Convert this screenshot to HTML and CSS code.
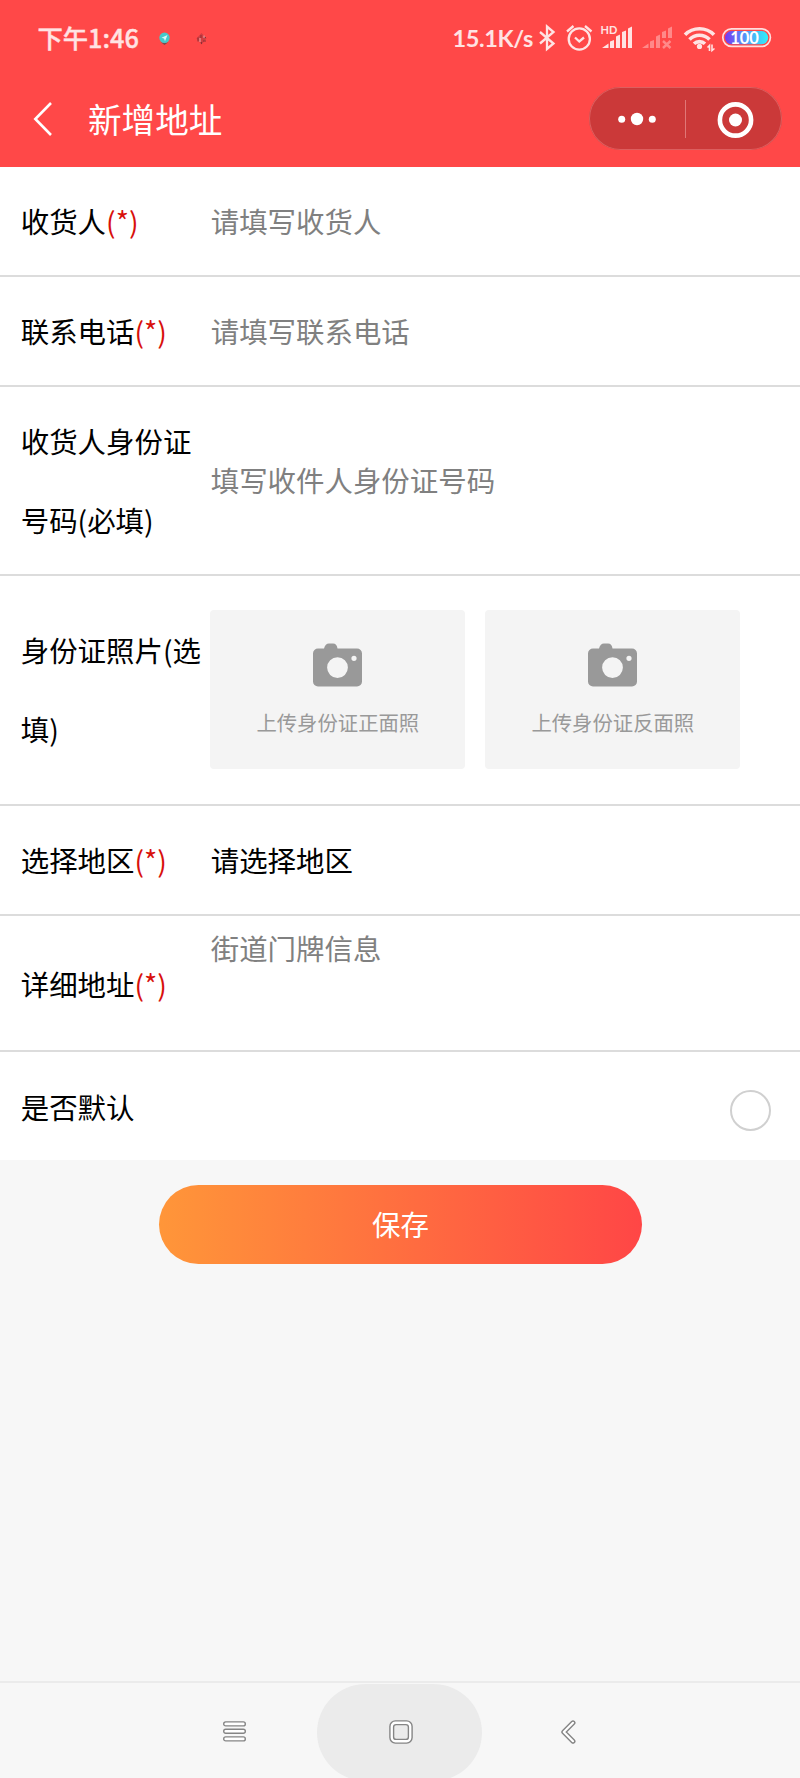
FILE: index.html
```html
<!DOCTYPE html>
<html lang="zh-CN">
<head>
<meta charset="utf-8">
<title>新增地址</title>
<link rel="stylesheet" href="styles.css">
</head>
<body>
<div class="screen">
  <header class="header">
    <div class="status">
      <span class="clock">下午1:46</span>
      <svg class="ic" width="30" height="30" viewBox="150 23 30 30"><path d="M161 42.500l3.500 2.500 3.500-2.500z" fill="#7d4a4a"/><circle cx="164.500" cy="37.700" r="5.200" fill="#45c9cb"/><path d="M167.500 35l-6 2.800 2.500.8 1 2.600z" fill="#d8f6f5"/></svg>
      <svg class="ic" width="30" height="30" viewBox="186 23 30 30"><path d="M201.500 33l5 5.500-5 6-5-6z" fill="#d23d42"/><path d="M198 37.500v4M201 35v3M201.500 42v2M203.500 37.500h2.500M203 41h3" stroke="#8d3035" stroke-width="1"/><path d="M200 38v4M204 35.500v2.500" stroke="#f5b0b0" stroke-width="1"/></svg>
      <span class="speed">15.1K/s</span>
      <svg class="ic" width="24" height="30" viewBox="536 23 24 30"><path d="M540 32l13.500 11.500-6.500 5.500V26.500l6.500 5.500L540 43.500" fill="none" stroke="#ffe3e3" stroke-width="2.300"/></svg>
      <svg class="ic" width="38" height="30" viewBox="560 23 38 30"><g fill="none" stroke="#ffe3e3" stroke-width="2.300"><circle cx="579.300" cy="39" r="10.600"/><path d="M575 37.500l4.300 4 4.700-4M567 31.500l6.500-5.500M591.500 31.500L585 26"/></g></svg>
      <svg class="ic" width="38" height="30" viewBox="598 23 38 30"><text class="hd" x="600.500" y="34">HD</text><path d="M602 48l6.500-4.500v4.500zM610 41.500l4-1.500v8h-4zM616 36.500l4-2V48h-4zM622 32l4-1.500V48h-4zM628 28.500l4-2V48h-4z" fill="#ffe3e3"/></svg>
      <svg class="ic" width="44" height="30" viewBox="636 23 44 30"><g opacity=".42"><path d="M642 48l6.500-4.500v4.500zM650 41.500l4-1.500v8h-4zM656 36.500l4-2V48h-4zM662 32l4-1.500V38h-4zM668 28.500l4-2V38h-4z" fill="#ffe3e3"/><path d="M663 41l7.500 7M670.500 41L663 48" stroke="#ffe3e3" stroke-width="2.400"/></g></svg>
      <svg class="ic" width="38" height="30" viewBox="680 23 38 30"><g fill="none" stroke="#ffe3e3" stroke-width="3.600"><path d="M685 34.800a20.500 20.500 0 0 1 29 0M689.500 39.500a14 14 0 0 1 20 0M694 43.800a8 8 0 0 1 11 0"/></g><circle cx="699.500" cy="46.400" r="2.600" fill="#ffe3e3"/><path d="M707.500 47.500l2-2V51M712 44.500v6l2.500-2" fill="none" stroke="#ffe3e3" stroke-width="1.600"/></svg>
      <svg class="ic" width="57" height="30" viewBox="718 23 57 30"><defs><linearGradient id="bat"><stop offset="0" stop-color="#7a35ee"/><stop offset=".5" stop-color="#529df8"/><stop offset="1" stop-color="#2ff0f8"/></linearGradient></defs><rect x="722.800" y="28.800" width="47.600" height="17.600" rx="8.800" fill="none" stroke="#ffdede" stroke-width="1.700"/><rect x="725" y="31" width="43.200" height="13.200" rx="6.600" fill="url(#bat)"/><text class="pct" x="744.500" y="43.600" text-anchor="middle">100</text></svg>
    </div>
    <div class="titlebar">
      <svg class="back" width="22" height="38" viewBox="32 100 22 38"><path d="M51 103L35.300 119 51 135" fill="none" stroke="#fff" stroke-width="2.600"/></svg>
      <h1 class="title">新增地址</h1>
      <div class="capsule">
        <svg width="193" height="63" viewBox="589 87 193 63"><g fill="#fff"><circle cx="621.700" cy="119.300" r="3.500"/><circle cx="637" cy="119" r="6.200"/><circle cx="652.300" cy="119.300" r="3.500"/><circle cx="735.500" cy="120" r="6.500"/></g><path d="M685.500 100v38" stroke="#e07777"/><circle cx="735.500" cy="120" r="15.600" fill="none" stroke="#fff" stroke-width="4.600"/></svg>
      </div>
    </div>
  </header>

  <main class="form">
    <div class="row row-name"><div class="label">收货人<span class="req">(*)</span></div><div class="hint">请填写收货人</div></div>
    <div class="row"><div class="label">联系电话<span class="req">(*)</span></div><div class="hint">请填写联系电话</div></div>
    <div class="row row-id"><div class="label">收货人身份证号码(必填)</div><div class="hint">填写收件人身份证号码</div></div>
    <div class="row row-photos">
      <div class="label">身份证照片(选填)</div>
      <div class="photos">
        <div class="photo"><svg width="49" height="44" viewBox="0 0 49 44"><path fill="#999" fill-rule="evenodd" d="M5 5.500h6C12 2 13.500.5 16 .5h4c2.500 0 4 1.500 4.500 5H44a5 5 0 0 1 5 5v28a5 5 0 0 1-5 5H5a5 5 0 0 1-5-5v-28a5 5 0 0 1 5-5zM24.500 14.200a10.400 10.400 0 1 0 0 20.800 10.400 10.400 0 0 0 0-20.800zM41 12.700a2.600 2.600 0 1 0 0 5.200 2.600 2.600 0 0 0 0-5.200z"/></svg><span>上传身份证正面照</span></div>
        <div class="photo"><svg width="49" height="44" viewBox="0 0 49 44"><path fill="#999" fill-rule="evenodd" d="M5 5.500h6C12 2 13.500.5 16 .5h4c2.500 0 4 1.500 4.500 5H44a5 5 0 0 1 5 5v28a5 5 0 0 1-5 5H5a5 5 0 0 1-5-5v-28a5 5 0 0 1 5-5zM24.500 14.200a10.400 10.400 0 1 0 0 20.800 10.400 10.400 0 0 0 0-20.800zM41 12.700a2.600 2.600 0 1 0 0 5.200 2.600 2.600 0 0 0 0-5.200z"/></svg><span>上传身份证反面照</span></div>
      </div>
    </div>
    <div class="row"><div class="label">选择地区<span class="req">(*)</span></div><div class="value">请选择地区</div></div>
    <div class="row row-detail"><div class="label">详细地址<span class="req">(*)</span></div><div class="hint">街道门牌信息</div></div>
    <div class="row row-default"><div class="label">是否默认</div><div class="radio"></div></div>
  </main>

  <button class="save">保存</button>

  <nav class="nav">
    <div class="key key-menu"><svg width="24" height="24" viewBox="0 0 24 24"><g fill="#fff" stroke="#858585" stroke-width="1.400"><rect x=".7" y="1.900" width="21.600" height="4" rx="2"/><rect x=".7" y="9.300" width="21.600" height="4" rx="2"/><rect x=".7" y="16.900" width="21.600" height="4" rx="2"/></g></svg></div>
    <div class="key key-home"><svg width="24" height="24" viewBox="0 0 24 24"><g stroke="#858585" stroke-width="1.400"><rect x=".9" y=".9" width="22.200" height="22.200" rx="5.500" fill="#fff"/><rect x="4.600" y="4.600" width="14.800" height="14.800" rx="2.500" fill="#ebebeb"/></g></svg></div>
    <div class="key key-back"><svg width="15" height="24" viewBox="0 0 15 24"><path d="M12 2.800L2.800 12 12 21.200" fill="none" stroke="#858585" stroke-width="5" stroke-linecap="round" stroke-linejoin="round"/><path d="M12 2.800L2.800 12 12 21.200" fill="none" stroke="#fff" stroke-width="2.200" stroke-linecap="round" stroke-linejoin="round"/></svg></div>
  </nav>
</div>
</body>
</html>
```
FILE: styles.css
```css
* { box-sizing: border-box; }
body {
  margin: 0;
  background: #f7f7f7;
  color: #000;
  font-family: "Noto Sans CJK SC", "Noto Sans", sans-serif;
}
svg { display: block; flex: none; }
.screen {
  display: flex;
  flex-direction: column;
  width: 800px;
  height: 1778px;
  overflow: hidden;
}
.header { height: 166.500px; flex: none; background: #ff4848; }
.status {
  display: flex;
  align-items: center;
  height: 76px;
  padding: 0 25px 0 37.500px;
  color: #ffe3e3;
  white-space: nowrap;
}
.clock {
  width: 112.500px;
  padding-bottom: 2px;
  font-size: 25.300px;
  font-weight: 500;
  line-height: 36px;
  -webkit-text-stroke: .4px #ffe3e3;
}
.clock + .ic { margin-right: 6px; }
.speed {
  margin-left: auto;
  margin-right: 3px;
  font-family: Lato, "Noto Sans", sans-serif;
  font-size: 23.500px;
  font-weight: 700;
  line-height: 36px;
  letter-spacing: -.35px;
}
.hd { font-family: Lato, sans-serif; font-size: 11px; font-weight: 700; fill: #ffe3e3; }
.pct { font-family: Lato, sans-serif; font-size: 16.500px; font-weight: 700; fill: #fff; }
.titlebar {
  display: flex;
  align-items: center;
  height: 86px;
  padding: 0 18px 0 32px;
}
.title {
  margin: 0 auto 0 34px;
  padding-bottom: 1px;
  color: #fff;
  font-size: 33.600px;
  font-weight: 400;
  line-height: 48px;
}
.capsule {
  width: 193px;
  height: 63px;
  margin-bottom: 1px;
  border-radius: 32px;
  background: #cb3939;
  box-shadow: inset 0 0 0 1px #dd5f5f;
}
.form { flex: none; background: #fff; font-size: 28.450px; line-height: 79px; }
.row {
  display: flex;
  align-items: center;
  height: 110px;
  padding-left: 20.700px;
  border-bottom: 2px solid #dcdcdc;
}
.row-name { height: 110.500px; }
.row-id { height: 189px; }
.row-photos { height: 230px; }
.row-detail { height: 136px; }
.row-default { height: 108px; border-bottom: 0; }
.label { width: 190px; flex: none; }
.label, .hint, .value { padding-bottom: 1.500px; }
.row-detail .label, .row-default .label { padding-bottom: 0; }
.req { color: #d8100c; }
.hint { color: #808080; }
.photos { display: flex; gap: 20px; margin: 0 0 1px -.4px; }
.photo {
  display: flex;
  flex-direction: column;
  align-items: center;
  width: 255px;
  height: 159px;
  padding-top: 33px;
  border-radius: 4px;
  background: #f4f4f4;
  color: #999;
  font-size: 20.350px;
  line-height: 30px;
}
.photo span { margin-top: 20px; }
.row-detail .hint { align-self: flex-start; margin-top: 12px; line-height: 40px; }
.radio {
  width: 41px;
  height: 41px;
  margin: 8px 29.500px 0 auto;
  border: 2px solid #d0d0d0;
  border-radius: 50%;
}
.save {
  flex: none;
  width: 483px;
  height: 79px;
  margin: 24.500px 0 0 159px;
  padding: 0 0 1px;
  border: 0;
  border-radius: 40px;
  background: linear-gradient(90deg, #ff9639, #ff4646);
  color: #fff;
  font: 400 28.450px/77px "Noto Sans CJK SC", sans-serif;
}
.nav {
  display: flex;
  flex: none;
  height: 97px;
  margin-top: auto;
  padding: 1px 0 0 151px;
  border-top: 2px solid #ebebeb;
}
.key {
  display: flex;
  justify-content: center;
  width: 166px;
  height: 97px;
  padding-top: 36px;
}
.key-menu { padding-left: 2px; }
.key-home { width: 165px; padding-left: 3px; border-radius: 49px; background: #ebebeb; }
.key-back { width: 173px; }
```
